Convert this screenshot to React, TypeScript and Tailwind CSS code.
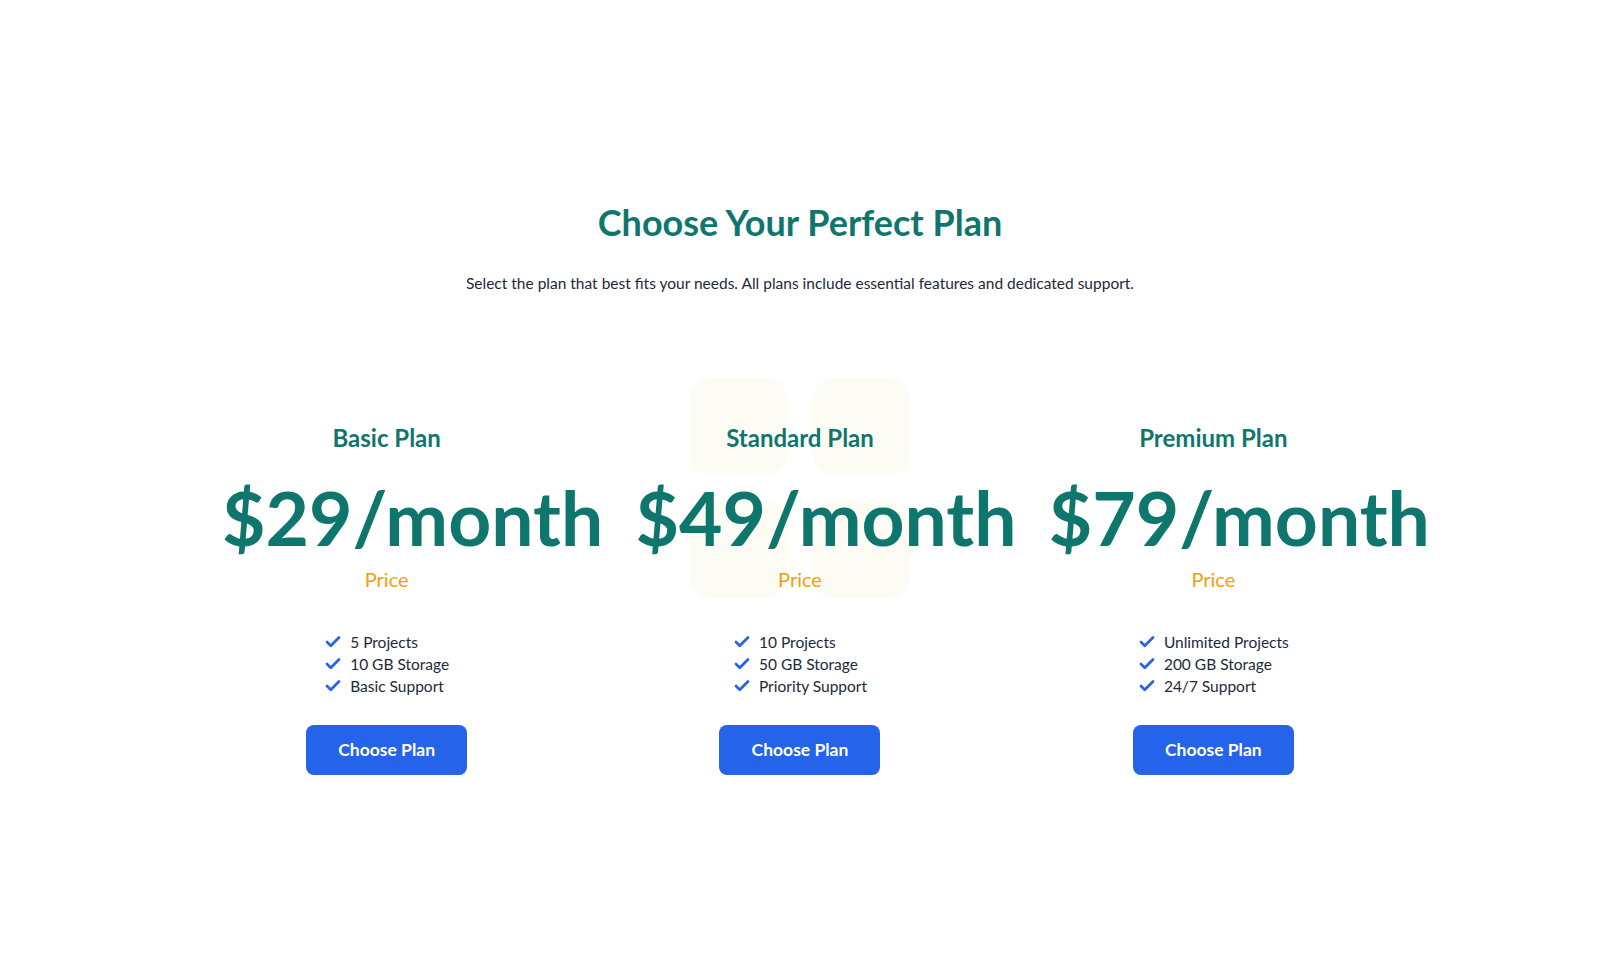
import { Check } from 'lucide-react';

type Plan = {
  name: string;
  price: string;
  features: string[];
  decorated?: boolean;
};

const plans: Plan[] = [
  { name: 'Basic Plan', price: '$29/month', features: ['5 Projects', '10 GB Storage', 'Basic Support'] },
  {
    name: 'Standard Plan',
    price: '$49/month',
    features: ['10 Projects', '50 GB Storage', 'Priority Support'],
    decorated: true,
  },
  { name: 'Premium Plan', price: '$79/month', features: ['Unlimited Projects', '200 GB Storage', '24/7 Support'] },
];

function PlanCard({ plan }: { plan: Plan }) {
  return (
    <div className="relative isolate flex flex-col items-center">
      {plan.decorated && (
        <div className="absolute top-[-44px] left-1/2 -z-10 grid w-max -translate-x-1/2 grid-cols-[98px_98px] gap-6">
          <div className="size-[98px] rounded-[22px] bg-[#fdfcf4]" />
          <div className="size-[98px] rounded-[22px] bg-[#fdfcf4]" />
          <div className="size-[98px] rounded-[22px] bg-[#fdfcf4]" />
          <div className="size-[98px] rounded-[22px] bg-[#fdfcf4]" />
        </div>
      )}
      <h3 className="text-2xl font-bold text-[#0f766e]">{plan.name}</h3>
      <p className="mt-[26px] ml-[52px] text-[75px] leading-none font-bold whitespace-nowrap text-[#0f766e]">
        {plan.price}
      </p>
      <p className="mt-[10px] text-xl text-[#f59e0b]">Price</p>
      <ul className="mt-[38px] flex flex-col text-[15.5px] leading-[22px] text-gray-800">
        {plan.features.map((f) => (
          <li key={f} className="flex items-center gap-2">
            <Check size={18} strokeWidth={3.6} className="text-[#2563eb]" />
            <span>{f}</span>
          </li>
        ))}
      </ul>
      <button className="mt-[28px] h-[50px] w-[161px] rounded-lg bg-[#2563eb] text-[17.5px] font-bold text-white">
        Choose Plan
      </button>
    </div>
  );
}

export default function App() {
  return (
    <div className="min-h-screen bg-white" style={{ fontFamily: 'Lato, "Noto Sans", sans-serif' }}>
      <section className="mx-auto max-w-7xl px-5 pt-[202px] pb-24">
        <h2 className="text-center text-4xl font-bold text-[#0f766e]">Choose Your Perfect Plan</h2>
        <p className="mt-[29px] text-center text-[15.5px] leading-6 text-gray-800">
          Select the plan that best fits your needs. All plans include essential features and dedicated support.
        </p>
        <div className="mt-[127px] grid grid-cols-3">
          {plans.map((p) => (
            <PlanCard key={p.name} plan={p} />
          ))}
        </div>
      </section>
    </div>
  );
}
